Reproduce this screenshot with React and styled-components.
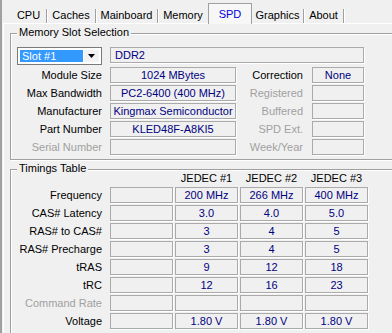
import React from "react";
import styled, { createGlobalStyle } from "styled-components";

const GlobalStyle = createGlobalStyle`
  html, body {
    margin: 0;
    padding: 0;
    background: #f0f0f0;
    overflow: hidden;
  }
  body {
    font-family: "Liberation Sans", Arial, sans-serif;
    font-size: 11px;
  }
`;

const Window = styled.div`
  width: 400px;
  height: 333px;
  box-sizing: border-box;
  border-left: 2px solid #a0a0a0;
  padding-left: 1px;
  background: #f0f0f0;
  display: flex;
  flex-direction: column;
  overflow: hidden;
`;

const TabBar = styled.div`
  flex-shrink: 0;
  display: flex;
  align-items: flex-end;
  height: 23px;
  padding-left: 8px;
`;

const Tab = styled.div`
  box-sizing: border-box;
  width: ${(p) => p.$w}px;
  height: 14px;
  line-height: 12px;
  text-align: center;
  color: #000;
  border-right: ${(p) => (p.$noSep ? "none" : "1px solid #a0a0a0")};
  box-shadow: ${(p) => (p.$noSep ? "none" : "1px 0 0 #fff")};
`;

const ActiveTab = styled.div`
  position: relative;
  z-index: 1;
  box-sizing: border-box;
  width: ${(p) => p.$w}px;
  height: 21px;
  margin-bottom: -1px;
  padding-top: 4px;
  line-height: 12px;
  text-align: center;
  color: #0000dd;
  background: #f7f7f7;
  border: 1px solid #a0a0a0;
  border-bottom: none;
`;

const Panel = styled.div`
  flex: 1;
  min-height: 0;
  border-top: 1px solid #fff;
  border-left: 1px solid #fff;
`;

const Group = styled.section`
  position: relative;
  box-sizing: border-box;
  width: 386px;
  margin: ${(p) => p.$top}px 0 0 6px;
  padding: ${(p) => p.$pad};
  border: 1px solid #a0a0a0;
  box-shadow: inset 1px 1px 0 #fff, 1px 1px 0 #fff;
`;

const GroupTitle = styled.div`
  position: absolute;
  top: -8px;
  left: 6px;
  padding: 0 2px;
  line-height: 13px;
  background: #f0f0f0;
  color: #000;
`;

const SlotGrid = styled.div`
  display: grid;
  grid-template-columns: 93px 126px 76px 52px;
  grid-template-rows: 18px repeat(5, 16px);
  row-gap: 2px;
`;

const Label = styled.div`
  padding-right: ${(p) => p.$pr || 8}px;
  line-height: 16px;
  text-align: right;
  white-space: nowrap;
  color: ${(p) => (p.$dim ? "#a0a0a0" : "#000")};
`;

const Field = styled.div`
  box-sizing: border-box;
  height: 16px;
  line-height: 14px;
  padding: 0 ${(p) => (p.$left ? "4px" : "0")};
  text-align: ${(p) => (p.$left ? "left" : "center")};
  white-space: nowrap;
  overflow: hidden;
  color: #000080;
  border: 1px solid #aaaaaa;
  box-shadow: 1px 1px 0 #fff;
  grid-column: ${(p) => p.$span || "auto"};
`;

const Combo = styled.div`
  box-sizing: border-box;
  display: flex;
  width: 85px;
  height: 18px;
  padding: 2px;
  background: #fff;
  border: 1px solid #7a7a7a;
`;

const ComboValue = styled.div`
  flex: 1;
  padding-left: 2px;
  line-height: 12px;
  color: #fff;
  background: #3399ff;
`;

const ComboButton = styled.div`
  width: 15px;
  margin-left: 1px;
  display: flex;
  align-items: center;
  justify-content: center;
  background: #f2f2f2;
`;

const TimingGrid = styled.div`
  display: grid;
  grid-template-columns: 91px repeat(4, 63px);
  grid-template-rows: 13px repeat(8, 16px);
  column-gap: 2px;
  row-gap: 2px;
`;

const Head = styled.div`
  line-height: 13px;
  text-align: center;
  color: #000;
  white-space: nowrap;
`;

const tabs = [
  { name: "CPU", w: 36 },
  { name: "Caches", w: 49 },
  { name: "Mainboard", w: 62 },
  { name: "Memory", w: 50, noSep: true },
  { name: "SPD", w: 44, active: true },
  { name: "Graphics", w: 52 },
  { name: "About", w: 40 },
];

const slotRows = [
  ["Module Size", "1024 MBytes", "Correction", "None"],
  ["Max Bandwidth", "PC2-6400 (400 MHz)", "Registered", ""],
  ["Manufacturer", "Kingmax Semiconductor", "Buffered", ""],
  ["Part Number", "KLED48F-A8KI5", "SPD Ext.", ""],
  ["Serial Number", "", "Week/Year", ""],
];

const timings = [
  ["Frequency", ["", "200 MHz", "266 MHz", "400 MHz"]],
  ["CAS# Latency", ["", "3.0", "4.0", "5.0"]],
  ["RAS# to CAS#", ["", "3", "4", "5"]],
  ["RAS# Precharge", ["", "3", "4", "5"]],
  ["tRAS", ["", "9", "12", "18"]],
  ["tRC", ["", "12", "16", "23"]],
  ["Command Rate", ["", "", "", ""], true],
  ["Voltage", ["", "1.80 V", "1.80 V", "1.80 V"]],
];

export default function App() {
  return (
    <>
      <GlobalStyle />
      <Window>
        <TabBar>
          {tabs.map((t) =>
            t.active ? (
              <ActiveTab key={t.name} $w={t.w}>
                {t.name}
              </ActiveTab>
            ) : (
              <Tab key={t.name} $w={t.w} $noSep={t.noSep}>
                {t.name}
              </Tab>
            )
          )}
        </TabBar>
        <Panel>
          <Group $top={9} $pad="13px 0 4px 6px">
            <GroupTitle>Memory Slot Selection</GroupTitle>
            <SlotGrid>
              <Combo>
                <ComboValue>Slot #1</ComboValue>
                <ComboButton>
                  <svg width="7" height="4" viewBox="0 0 7 4">
                    <path d="M0 0h7L3.5 4z" fill="#000" />
                  </svg>
                </ComboButton>
              </Combo>
              <Field $left $span="2 / 5">
                DDR2
              </Field>
              {slotRows.map(([l1, v1, l2, v2]) => (
                <React.Fragment key={l1}>
                  <Label $dim={l1 === "Serial Number"}>{l1}</Label>
                  <Field>{v1}</Field>
                  <Label $pr={9} $dim={l2 !== "Correction"}>
                    {l2}
                  </Label>
                  <Field>{v2}</Field>
                </React.Fragment>
              ))}
            </SlotGrid>
          </Group>
          <Group $top={9} $pad="2px 0 10px 6px">
            <GroupTitle>Timings Table</GroupTitle>
            <TimingGrid>
              <div />
              <div />
              <Head>JEDEC #1</Head>
              <Head>JEDEC #2</Head>
              <Head>JEDEC #3</Head>
              {timings.map(([label, vals, dim]) => (
                <React.Fragment key={label}>
                  <Label $pr={6} $dim={dim}>
                    {label}
                  </Label>
                  {vals.map((v, i) => (
                    <Field key={i}>{v}</Field>
                  ))}
                </React.Fragment>
              ))}
            </TimingGrid>
          </Group>
        </Panel>
      </Window>
    </>
  );
}
